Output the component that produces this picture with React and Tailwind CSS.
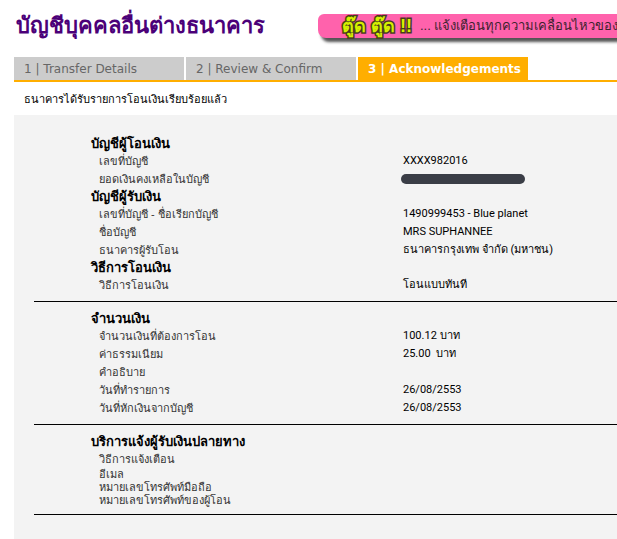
const steps = [
    { id: 1, label: "Transfer Details" },
    { id: 2, label: "Review & Confirm" },
    { id: 3, label: "Acknowledgements" },
];

const currentStep = 3;

const sections = [
    {
        id: "accounts",
        groups: [
            {
                title: "บัญชีผู้โอนเงิน",
                rows: [
                    { label: "เลขที่บัญชี", value: "XXXX982016" },
                    { label: "ยอดเงินคงเหลือในบัญชี", hidden: true },
                ],
            },
            {
                title: "บัญชีผู้รับเงิน",
                rows: [
                    { label: "เลขที่บัญชี - ชื่อเรียกบัญชี", value: "1490999453 - Blue planet" },
                    { label: "ชื่อบัญชี", value: "MRS SUPHANNEE" },
                    { label: "ธนาคารผู้รับโอน", value: "ธนาคารกรุงเทพ จำกัด (มหาชน)" },
                ],
            },
            {
                title: "วิธีการโอนเงิน",
                rows: [{ label: "วิธีการโอนเงิน", value: "โอนแบบทันที" }],
            },
        ],
    },
    {
        id: "amount",
        groups: [
            {
                title: "จำนวนเงิน",
                rows: [
                    { label: "จำนวนเงินที่ต้องการโอน", value: "100.12 บาท" },
                    { label: "ค่าธรรมเนียม", value: "25.00  บาท" },
                    { label: "คำอธิบาย" },
                    { label: "วันที่ทำรายการ", value: "26/08/2553" },
                    { label: "วันที่หักเงินจากบัญชี", value: "26/08/2553" },
                ],
            },
        ],
    },
    {
        id: "notify",
        groups: [
            {
                title: "บริการแจ้งผู้รับเงินปลายทาง",
                rows: [
                    { label: "วิธีการแจ้งเตือน" },
                    { label: "อีเมล", compact: true },
                    { label: "หมายเลขโทรศัพท์มือถือ", compact: true },
                    { label: "หมายเลขโทรศัพท์ของผู้โอน", compact: true },
                ],
            },
        ],
    },
];

const Banner = () => (
    <a
        href="#alerts"
        className="mt-[14px] ml-auto flex h-6 w-[299px] shrink-0 items-center rounded-tl-md rounded-bl-lg bg-[#ff62ac] pl-6 whitespace-nowrap shadow-[3px_4px_3px_#555]"
    >
        <span className="text-[18px] leading-6 font-bold text-[#d5f000] [-webkit-text-stroke:3px_#4b3a1c] [paint-order:stroke_fill]">
            ตู๊ด ตู๊ด !!
        </span>
        <span className="ml-2 text-[13px] leading-6 text-[#40222f]">... แจ้งเตือนทุกความเคลื่อนไหวของ</span>
    </a>
);

const Steps = () => (
    <ol className="flex gap-[2px] border-b-2 border-[#ffae00] font-['DejaVu_Sans',sans-serif] text-[12px]">
        {steps.map((step) => (
            <li
                key={step.id}
                aria-current={step.id === currentStep ? "step" : undefined}
                className={
                    step.id === currentStep
                        ? "h-[23px] w-[170px] bg-[#ffae00] pl-[10px] leading-6 font-bold whitespace-nowrap text-white"
                        : "h-[23px] w-[170px] bg-[#cccccc] pl-[10px] leading-6 whitespace-nowrap text-[#666666]"
                }
            >
                {step.id} | {step.label}
            </li>
        ))}
    </ol>
);

const DetailRow = ({ row }) => (
    <tr className={row.compact ? "h-[13px] leading-[13px]" : "h-[18px] leading-[18px]"}>
        <th scope="row" className="p-0 pl-[65px] text-left font-normal text-[#333333]">
            {row.label}
        </th>
        <td className="p-0 font-[Roboto,'Liberation_Sans',sans-serif] whitespace-pre text-black">
            {row.hidden ? (
                <span className="-ml-[2px] block h-[10px] w-[124px] rounded-full bg-[#3a3d46]" />
            ) : (
                row.value
            )}
        </td>
    </tr>
);

const Section = ({ section }) => (
    <section className="border-b border-black pt-2 pb-[7px]">
        <table className="w-full table-fixed border-collapse">
            <colgroup>
                <col className="w-[369px]" />
                <col />
            </colgroup>
            {section.groups.map((group) => (
                <tbody key={group.title}>
                    <tr className="h-[17px] leading-[17px]">
                        <th
                            colSpan={2}
                            scope="rowgroup"
                            className="p-0 pl-[57px] text-left text-[13px] font-bold text-black"
                        >
                            {group.title}
                        </th>
                    </tr>
                    {group.rows.map((row) => (
                        <DetailRow key={row.label} row={row} />
                    ))}
                </tbody>
            ))}
        </table>
    </section>
);

const App = () => {
    return (
        <div className="min-h-screen bg-white pl-[14px] font-['Liberation_Sans',sans-serif] text-[11px]">
            <header className="flex h-[57px] items-start overflow-x-clip">
                <h1 className="mt-2 pl-[2px] text-[22px] leading-9 font-bold whitespace-nowrap text-[#4b0078]">
                    บัญชีบุคคลอื่นต่างธนาคาร
                </h1>
                <Banner />
            </header>
            <Steps />
            <p className="h-[33px] pl-[10px] leading-[34px] text-black">ธนาคารได้รับรายการโอนเงินเรียบร้อยแล้ว</p>
            <main className="bg-[#f3f3f3] pt-3 pb-[25px] pl-5">
                {sections.map((section) => (
                    <Section key={section.id} section={section} />
                ))}
            </main>
        </div>
    );
};

export default App;
